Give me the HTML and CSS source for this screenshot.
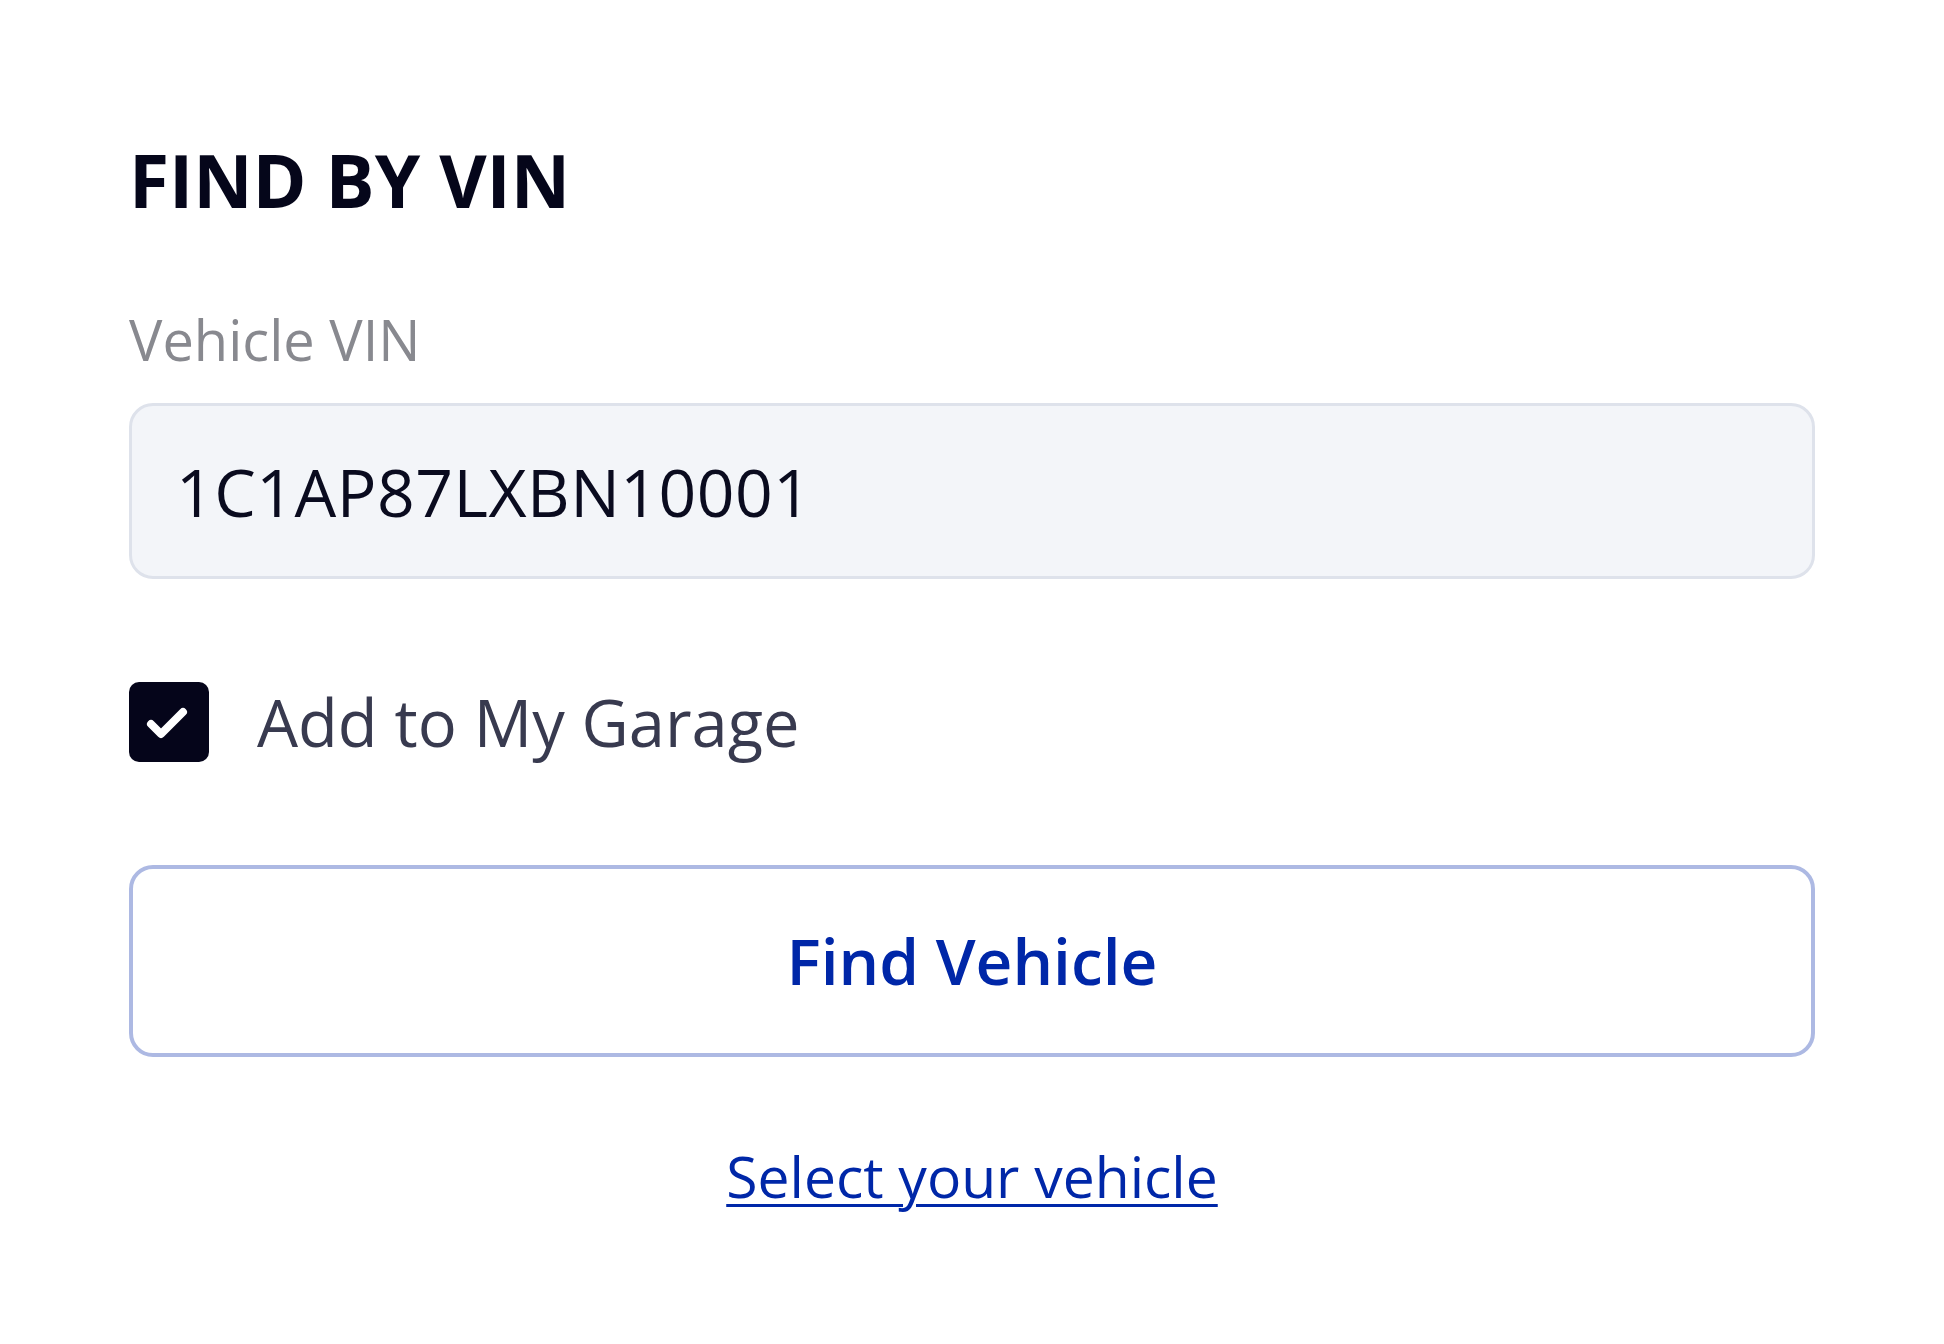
FILE: index.html
```html
<!DOCTYPE html>
<html lang="en">
<head>
<meta charset="utf-8">
<title>Find by VIN</title>
<link rel="stylesheet" href="styles.css">
</head>
<body>
<main class="panel">
  <h1 class="title">FIND BY VIN</h1>
  <label class="field-label" for="vin">Vehicle VIN</label>
  <input class="vin-input" id="vin" type="text" value="1C1AP87LXBN10001">
  <label class="garage-row">
    <span class="checkbox">
      <svg width="80" height="80" viewBox="0 0 80 80" aria-hidden="true">
        <path d="M22 42 L32 52 L54 30" fill="none" stroke="#ffffff" stroke-width="8" stroke-linecap="round" stroke-linejoin="round"/>
      </svg>
    </span>
    <span class="garage-text">Add to My Garage</span>
  </label>
  <button class="find-btn" type="button">Find Vehicle</button>
  <div class="link-row"><a class="select-link" href="#">Select your vehicle</a></div>
</main>
</body>
</html>
```
FILE: styles.css
```css
* { box-sizing: border-box; }
html, body { margin: 0; padding: 0; background: #ffffff; }
body { font-family: "Open Sans", "Noto Sans", sans-serif; min-height: 100vh; }

.panel {
  display: flex;
  flex-direction: column;
  padding: 144px 129px 120px 129px;
}

.title {
  margin: 0;
  font-size: 73px;
  line-height: 72px;
  font-weight: 700;
  color: #05061a;
}

.field-label {
  margin-top: 95px;
  font-size: 56px;
  line-height: 56px;
  color: #88898f;
}

.vin-input {
  margin-top: 36px;
  width: 100%;
  height: 176px;
  border: 3px solid #dee2eb;
  border-radius: 24px;
  background: #f3f5f9;
  padding: 0 44px;
  font-family: "Open Sans", "Noto Sans", sans-serif;
  font-size: 66px;
  letter-spacing: 0.5px;
  color: #0a0b1f;
  outline: none;
}

.garage-row {
  margin-top: 103px;
  display: flex;
  align-items: center;
  gap: 48px;
}

.checkbox {
  width: 80px;
  height: 80px;
  border-radius: 10px;
  background: #05051a;
  display: flex;
}

.garage-text {
  font-size: 65px;
  line-height: 64px;
  color: #383a4f;
}

.find-btn {
  margin-top: 103px;
  width: 100%;
  height: 192px;
  border: 4px solid #adb9e3;
  border-radius: 24px;
  background: #ffffff;
  font-family: "Open Sans", "Noto Sans", sans-serif;
  font-size: 64px;
  line-height: 64px;
  font-weight: 600;
  color: #0027a8;
}

.link-row {
  margin-top: 91px;
  display: flex;
  justify-content: center;
}

.select-link {
  font-size: 57px;
  line-height: 56px;
  color: #0027a8;
  text-decoration: underline;
  text-decoration-thickness: 3px;
  text-underline-offset: 6px;
}
```
